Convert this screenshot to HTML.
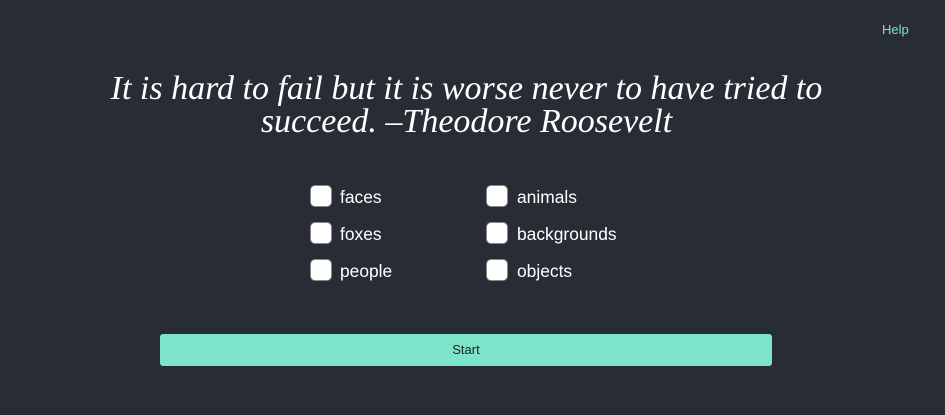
<!DOCTYPE html>
<html><head><style>
body{margin:0;width:945px;height:415px;background:#282c34;font-family:"Liberation Sans",sans-serif;position:relative;overflow:hidden}
.help{position:absolute;left:882px;top:22px;color:#7de3c9;font-size:13px}
.q{position:absolute;left:0;width:933px;top:72px;text-align:center;color:#fff;font-family:"Liberation Serif",serif;font-style:italic;font-size:34px;line-height:33px}
.cb{position:absolute;width:20px;height:20px;background:#fff;border:1px solid #888;border-radius:5px}
.l{position:absolute;color:#fff;font-size:17.4px;line-height:20px}
.btn{position:absolute;left:160px;top:334px;width:612px;height:32px;background:#7de3c9;border-radius:3px;text-align:center;line-height:32px;font-size:13px;color:#222}
</style></head><body>
<div class="help">Help</div>
<div class="q">It is hard to fail but it is worse never to have tried to<br>succeed. –Theodore Roosevelt</div>
<div class="cb" style="left:310px;top:185px"></div><div class="l" style="left:340px;top:187px">faces</div>
<div class="cb" style="left:310px;top:222px"></div><div class="l" style="left:340px;top:224px">foxes</div>
<div class="cb" style="left:310px;top:259px"></div><div class="l" style="left:340px;top:261px">people</div>
<div class="cb" style="left:486px;top:185px"></div><div class="l" style="left:517px;top:187px">animals</div>
<div class="cb" style="left:486px;top:222px"></div><div class="l" style="left:517px;top:224px">backgrounds</div>
<div class="cb" style="left:486px;top:259px"></div><div class="l" style="left:517px;top:261px">objects</div>
<div class="btn">Start</div>
</body></html>
